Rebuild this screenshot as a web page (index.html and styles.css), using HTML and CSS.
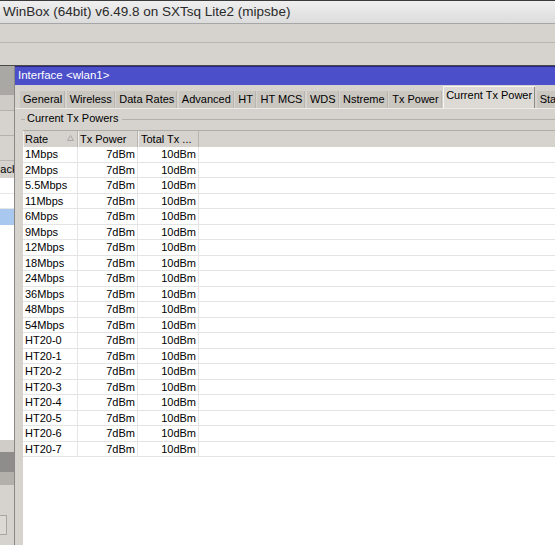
FILE: index.html
```html
<!DOCTYPE html>
<html>
<head>
<meta charset="utf-8">
<title>WinBox</title>
<link rel="stylesheet" href="styles.css">
</head>
<body>
<div class="app">
  <div class="titlebar">WinBox (64bit) v6.49.8 on SXTsq Lite2 (mipsbe)</div>
  <div class="toolbar t1"></div>
  <div class="toolbar t2"></div>
  <div class="main">
    <div class="side">
      <div class="s-dark"></div>
      <div class="s-b1"></div>
      <div class="s-b2"></div>
      <div class="s-b3"></div>
      <div class="s-head"><span class="s-head-text">Packets</span></div>
      <div class="s-list">
        <div class="s-row"></div>
        <div class="s-row"></div>
        <div class="s-row sel"></div>
        <div class="s-fill"></div>
      </div>
      <div class="s-f1"></div>
      <div class="s-f2"></div>
      <div class="s-f3"></div>
      <div class="s-f4"><span class="s-btn"></span></div>
    </div>
    <div class="win">
      <div class="win-title">Interface &lt;wlan1&gt;</div>
      <div class="tabs">
        <div class="tab">General</div>
        <div class="tab">Wireless</div>
        <div class="tab">Data Rates</div>
        <div class="tab">Advanced</div>
        <div class="tab">HT</div>
        <div class="tab">HT MCS</div>
        <div class="tab">WDS</div>
        <div class="tab">Nstreme</div>
        <div class="tab">Tx Power</div>
        <div class="tab active">Current Tx Power</div>
        <div class="tab">Status</div>
      </div>
      <div class="win-body">
        <div class="group">
          <span class="g-line short"></span>
          <span class="g-label">Current Tx Powers</span>
          <span class="g-line"></span>
        </div>
        <div class="grid">
          <div class="thead">
            <div class="th c1"><span>Rate</span><svg class="sort" width="7" height="6" viewBox="0 0 7 6"><path d="M3.5 0.5 L6.5 5.5 L0.5 5.5 Z" fill="none" stroke="#a8a8a8" stroke-width="1"/></svg></div>
            <div class="th c2">Tx Power</div>
            <div class="th c3">Total Tx ...</div>
            <div class="th c4"></div>
          </div>
          <div class="row"><div class="td c1">1Mbps</div><div class="td c2 r">7dBm</div><div class="td c3 r">10dBm</div><div class="td c4"></div></div>
          <div class="row"><div class="td c1">2Mbps</div><div class="td c2 r">7dBm</div><div class="td c3 r">10dBm</div><div class="td c4"></div></div>
          <div class="row"><div class="td c1">5.5Mbps</div><div class="td c2 r">7dBm</div><div class="td c3 r">10dBm</div><div class="td c4"></div></div>
          <div class="row"><div class="td c1">11Mbps</div><div class="td c2 r">7dBm</div><div class="td c3 r">10dBm</div><div class="td c4"></div></div>
          <div class="row"><div class="td c1">6Mbps</div><div class="td c2 r">7dBm</div><div class="td c3 r">10dBm</div><div class="td c4"></div></div>
          <div class="row"><div class="td c1">9Mbps</div><div class="td c2 r">7dBm</div><div class="td c3 r">10dBm</div><div class="td c4"></div></div>
          <div class="row"><div class="td c1">12Mbps</div><div class="td c2 r">7dBm</div><div class="td c3 r">10dBm</div><div class="td c4"></div></div>
          <div class="row"><div class="td c1">18Mbps</div><div class="td c2 r">7dBm</div><div class="td c3 r">10dBm</div><div class="td c4"></div></div>
          <div class="row"><div class="td c1">24Mbps</div><div class="td c2 r">7dBm</div><div class="td c3 r">10dBm</div><div class="td c4"></div></div>
          <div class="row"><div class="td c1">36Mbps</div><div class="td c2 r">7dBm</div><div class="td c3 r">10dBm</div><div class="td c4"></div></div>
          <div class="row"><div class="td c1">48Mbps</div><div class="td c2 r">7dBm</div><div class="td c3 r">10dBm</div><div class="td c4"></div></div>
          <div class="row"><div class="td c1">54Mbps</div><div class="td c2 r">7dBm</div><div class="td c3 r">10dBm</div><div class="td c4"></div></div>
          <div class="row"><div class="td c1">HT20-0</div><div class="td c2 r">7dBm</div><div class="td c3 r">10dBm</div><div class="td c4"></div></div>
          <div class="row"><div class="td c1">HT20-1</div><div class="td c2 r">7dBm</div><div class="td c3 r">10dBm</div><div class="td c4"></div></div>
          <div class="row"><div class="td c1">HT20-2</div><div class="td c2 r">7dBm</div><div class="td c3 r">10dBm</div><div class="td c4"></div></div>
          <div class="row"><div class="td c1">HT20-3</div><div class="td c2 r">7dBm</div><div class="td c3 r">10dBm</div><div class="td c4"></div></div>
          <div class="row"><div class="td c1">HT20-4</div><div class="td c2 r">7dBm</div><div class="td c3 r">10dBm</div><div class="td c4"></div></div>
          <div class="row"><div class="td c1">HT20-5</div><div class="td c2 r">7dBm</div><div class="td c3 r">10dBm</div><div class="td c4"></div></div>
          <div class="row"><div class="td c1">HT20-6</div><div class="td c2 r">7dBm</div><div class="td c3 r">10dBm</div><div class="td c4"></div></div>
          <div class="row"><div class="td c1">HT20-7</div><div class="td c2 r">7dBm</div><div class="td c3 r">10dBm</div><div class="td c4"></div></div>
        </div>
      </div>
    </div>
  </div>
</div>
</body>
</html>
```
FILE: styles.css
```css
* { box-sizing: border-box; }
html, body { margin: 0; padding: 0; }
body {
  width: 555px;
  height: 545px;
  overflow: hidden;
  background: #d6d3ce;
  font-family: "Liberation Sans", Arial, sans-serif;
  font-size: 11px;
  color: #000;
}
.app {
  width: 555px;
  height: 545px;
  display: flex;
  flex-direction: column;
}
.titlebar {
  height: 24px;
  border-top: 1px solid #3a3a3a;
  border-bottom: 1px solid #a6a6a6;
  background: linear-gradient(#efefef, #dcdcdc);
  font-size: 13.5px;
  line-height: 22px;
  padding-left: 3px;
  color: #2a2a2a;
  white-space: nowrap;
}
.toolbar { background: #d6d3ce; }
.t1 { height: 19px; border-bottom: 1px solid #b9b6b1; }
.t2 { height: 23px; border-bottom: 1px solid #4a4a4a; }
.main {
  flex: 1;
  display: flex;
  min-height: 0;
}
.side {
  width: 15px;
  border-right: 1px solid #8a8886;
  display: flex;
  flex-direction: column;
  overflow: hidden;
}
.s-dark { height: 29px; background: #aaa8a4; }
.s-b1 { height: 16px; background: #cfccc7; border-bottom: 1px solid #b5b2ad; }
.s-b2 { height: 25px; background: #d6d3ce; border-bottom: 1px solid #b5b2ad; }
.s-b3 { height: 24px; background: #d6d3ce; }
.s-head {
  height: 18px;
  background: #d6d3ce;
  border-top: 1px solid #bab7b2;
  line-height: 17px;
  white-space: nowrap;
  overflow: hidden;
}
.s-head-text { display: inline-block; margin-left: -7px; }
.s-list {
  height: 262px;
  background: #fff;
  display: flex;
  flex-direction: column;
}
.s-row { height: 15.5px; border-bottom: 1px solid #e6e6e6; }
.s-row.sel { background: #a9c8ef; border-bottom: none; }
.s-fill { flex: 1; }
.s-f1 { height: 12px; background: #d0cdc8; }
.s-f2 { height: 20px; background: #8f8d8b; }
.s-f3 { height: 13px; background: #b3b0ab; }
.s-f4 { flex: 1; background: #d6d3ce; padding-top: 30px; }
.s-btn {
  display: block;
  width: 7px;
  height: 20px;
  border: 1px solid #a9a6a1;
  border-left: none;
  background: #dcd9d4;
}
.win {
  flex: 1;
  display: flex;
  flex-direction: column;
  min-width: 0;
  overflow: hidden;
}
.win-title {
  height: 19px;
  border-top: 1px solid #262680;
  background: #4b4fc9;
  color: #fff;
  font-size: 11.5px;
  line-height: 17px;
  padding-left: 3px;
  white-space: nowrap;
}
.tabs {
  height: 24px;
  display: flex;
  align-items: flex-end;
  padding-left: 5px;
  border-bottom: 1px solid #ecebe8;
  white-space: nowrap;
  overflow: hidden;
}
.tab {
  flex: none;
  height: 17px;
  line-height: 16px;
  padding: 0 3px;
  margin-right: 1.5px;
  background: #cac7c1;
  box-shadow: inset -1px 0 #b9b6b1;
}
.tab.active {
  height: 22px;
  line-height: 19px;
  background: #dddad5;
  box-shadow: inset 1px 1px #f6f5f2, inset -1px 0 #8d8b88;
}
.win-body {
  flex: 1;
  display: flex;
  flex-direction: column;
  padding-left: 6px;
  min-height: 0;
}
.group {
  height: 21px;
  display: flex;
  align-items: center;
}
.g-line {
  flex: 1;
  height: 1px;
  background: #b3b0ab;
}
.g-line.short { flex: none; width: 4px; }
.g-label {
  padding: 0 3px 2px 2px;
  line-height: 13px;
  white-space: nowrap;
}
.grid {
  flex: 1;
  margin-left: 2px;
  background: #fff;
  display: flex;
  flex-direction: column;
  overflow: hidden;
}
.thead {
  height: 17px;
  flex: none;
  display: flex;
  background: #d6d3ce;
  border-top: 1px solid #b0ada8;
}
.th {
  line-height: 16px;
  padding-left: 2px;
  border-right: 1px solid #b8b5b0;
  box-shadow: inset 1px 0 #efeeeb;
  white-space: nowrap;
  overflow: hidden;
}
.th.c1 {
  display: flex;
  align-items: center;
  justify-content: space-between;
  padding-right: 3px;
}
.th.c1 .sort { flex: none; margin-top: -3px; }
.th.c3 { padding-left: 3px; }
.th.c4 { border-right: none; box-shadow: none; }
.c1 { width: 55px; flex: none; }
.c2 { width: 60px; flex: none; }
.c3 { width: 61px; flex: none; }
.c4 { flex: 1; }
.row {
  height: 15.5px;
  flex: none;
  display: flex;
  border-bottom: 1px solid #e4e4e4;
}
.td {
  line-height: 14.5px;
  padding-left: 2px;
  border-right: 1px solid #e6e6e6;
  white-space: nowrap;
}
.td.r { text-align: right; padding-right: 2px; padding-left: 0; }
.td.c4 { border-right: none; }
```
